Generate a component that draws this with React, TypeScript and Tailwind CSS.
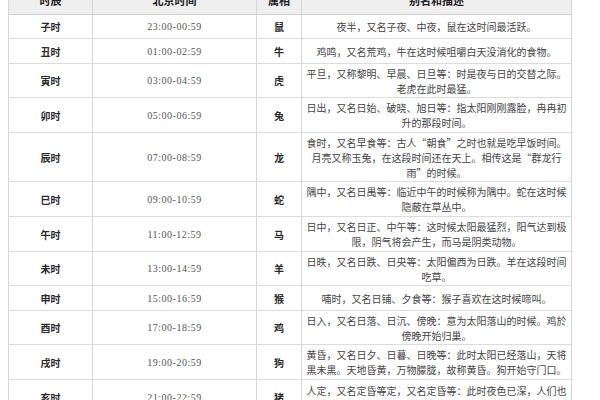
import React from "react";

type Row = { name: string; time: string; animal: string; lines: string[]; h: string };

const rows: Row[] = [
  { name: "子时", time: "23:00-00:59", animal: "鼠", h: "h-[24px]", lines: ["夜半，又名子夜、中夜，鼠在这时间最活跃。"] },
  { name: "丑时", time: "01:00-02:59", animal: "牛", h: "h-[25px]", lines: ["鸡鸣，又名荒鸡，牛在这时候咀嚼白天没消化的食物。"] },
  { name: "寅时", time: "03:00-04:59", animal: "虎", h: "h-[34px]", lines: ["平旦，又称黎明、早晨、日旦等：时是夜与日的交替之际。", "老虎在此时最猛。"] },
  { name: "卯时", time: "05:00-06:59", animal: "兔", h: "h-[35px]", lines: ["日出，又名日始、破晓、旭日等：指太阳刚刚露脸，冉冉初", "升的那段时间。"] },
  { name: "辰时", time: "07:00-08:59", animal: "龙", h: "h-[49px]", lines: ["食时，又名早食等：古人“朝食”之时也就是吃早饭时间。", "月亮又称玉兔，在这段时间还在天上。相传这是“群龙行", "雨”的时候。"] },
  { name: "巳时", time: "09:00-10:59", animal: "蛇", h: "h-[35px]", lines: ["隅中，又名日禺等：临近中午的时候称为隅中。蛇在这时候", "隐蔽在草丛中。"] },
  { name: "午时", time: "11:00-12:59", animal: "马", h: "h-[35px]", lines: ["日中，又名日正、中午等：这时候太阳最猛烈，阳气达到极", "限，阴气将会产生，而马是阴类动物。"] },
  { name: "未时", time: "13:00-14:59", animal: "羊", h: "h-[34px]", lines: ["日昳，又名日跌、日央等：太阳偏西为日跌。羊在这段时间", "吃草。"] },
  { name: "申时", time: "15:00-16:59", animal: "猴", h: "h-[25px]", lines: ["哺时，又名日铺、夕食等：猴子喜欢在这时候啼叫。"] },
  { name: "酉时", time: "17:00-18:59", animal: "鸡", h: "h-[34px]", lines: ["日入，又名日落、日沉、傍晚：意为太阳落山的时候。鸡於", "傍晚开始归巢。"] },
  { name: "戌时", time: "19:00-20:59", animal: "狗", h: "h-[35px]", lines: ["黄昏，又名日夕、日暮、日晚等：此时太阳已经落山，天将", "黑未黑。天地昏黄，万物朦胧，故称黄昏。狗开始守门口。"] },
  { name: "亥时", time: "21:00-22:59", animal: "猪", h: "h-[36px]", lines: ["人定，又名定昏等定，又名定昏等：此时夜色已深，人们也", "已经停止活动，安歇睡眠了。人定也就是人静。"] },
];

const cjk = "font-['Noto_Sans_CJK_SC','Noto_Sans',sans-serif]";

export default function App() {
  return (
    <div className="w-[600px] h-[400px] overflow-hidden bg-white">
      <div className={`mt-[-14px] ml-2 w-[564px] border-r border-[#d6d6d6] ${cjk}`}>
        <div className="grid grid-cols-[84px_164px_45px_270px] h-[29px] border-b border-[#cfcfcf] bg-[#efefef] text-[11px] font-bold text-[#222]">
          <div className="flex items-center justify-center border-l border-[#d6d6d6]">时辰</div>
          <div className="flex items-center justify-center border-l border-[#d6d6d6]">北京时间</div>
          <div className="flex items-center justify-center border-l border-[#d6d6d6]">属相</div>
          <div className="flex items-center justify-center border-l border-[#d6d6d6]">别名和描述</div>
        </div>
        {rows.map((r) => (
          <div key={r.name} className={`grid grid-cols-[84px_164px_45px_270px] ${r.h} border-b border-[#dcdcdc]`}>
            <div className="flex items-center justify-center border-l border-[#d6d6d6] text-[10px] font-bold text-[#2a2a2a]">{r.name}</div>
            <div className="flex items-center justify-center border-l border-[#d6d6d6] font-['Liberation_Serif',serif] text-[10px] tracking-[0.5px] text-[#555]">{r.time}</div>
            <div className="flex items-center justify-center border-l border-[#d6d6d6] text-[10px] font-bold text-[#2a2a2a]">{r.animal}</div>
            <div className="flex flex-col items-center justify-center border-l border-[#d6d6d6] text-[10px] leading-[15px] text-[#444]">
              {r.lines.map((l, i) => (
                <div key={i} className="whitespace-nowrap">{l}</div>
              ))}
            </div>
          </div>
        ))}
      </div>
    </div>
  );
}
